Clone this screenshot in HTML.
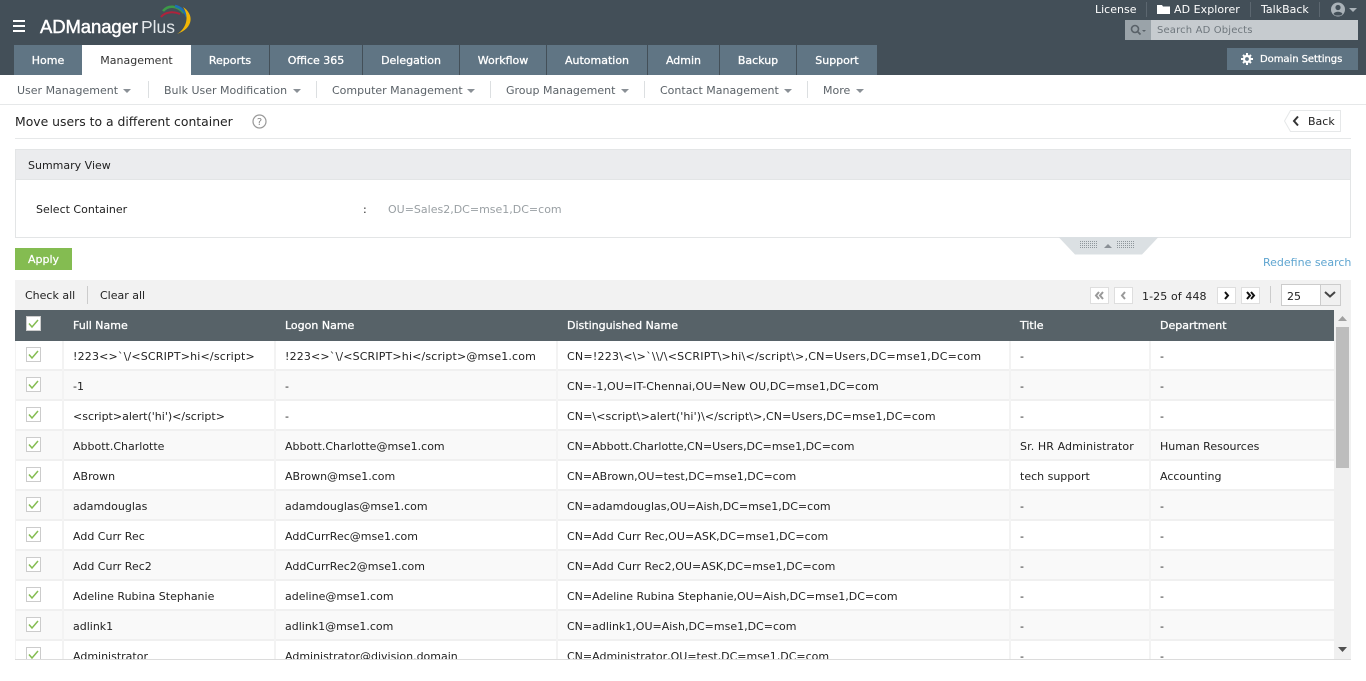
<!DOCTYPE html>
<html><head><meta charset="utf-8"><title>ADManager Plus</title>
<style>
html,body{margin:0;padding:0;background:#fff}
body{width:1366px;height:681px;position:relative;overflow:hidden;font:11px "DejaVu Sans",Verdana,sans-serif;color:#222}
.a,.a *{box-sizing:border-box}
.a{position:absolute;white-space:pre}
.t{position:absolute;white-space:pre;line-height:14px}
.s{-webkit-text-stroke:.3px}
.tab{position:absolute;top:45px;height:30px;background:#607584;color:#fff;font-size:11px;line-height:32px;text-align:center;-webkit-text-stroke:.3px #fff}
.sub{position:absolute;top:84px;color:#5b6268;font-size:11px;line-height:14px;white-space:pre}
.car{position:absolute;top:89px;width:0;height:0;border:4px solid transparent;border-top:4px solid #8a9096;border-bottom:0}
.sep{position:absolute;top:81px;width:1px;height:17px;background:#dcdfe1}
.r{position:absolute;left:15px;width:1319px;height:30px;border-bottom:2px solid #f0f0f0;box-sizing:border-box;overflow:visible}
.e{background:#f9f9f9}
.r span{position:absolute;top:9px;white-space:pre;line-height:14px;color:#222}
.r span:nth-of-type(1){left:58px}.r span:nth-of-type(2){left:270px}.r span:nth-of-type(3){left:552px}.r span:nth-of-type(4){left:1005px}.r span:nth-of-type(5){left:1145px}
.r svg{position:absolute;left:11px;top:6px}
.v{position:absolute;top:341px;width:2px;height:318px;background:#f3f3f3}
.pg{position:absolute;top:287px;width:19px;height:17px;background:#fff;border:1px solid #dedede;box-sizing:border-box}
.h{position:absolute;top:319px;color:#fff;font-size:11px;line-height:14px;white-space:pre;-webkit-text-stroke:.3px #fff}
</style></head><body>
<div class="a" style="left:0;top:0;width:1366px;height:75px;background:#434f58"></div>
<svg class="a" style="left:13px;top:20px" width="13" height="13"><rect width="12" height="2" y="0" fill="#fff"/><rect width="12" height="2" y="5" fill="#fff"/><rect width="12" height="2" y="10" fill="#fff"/></svg>
<div class="t" style="left:40px;top:16px;font:18.500px/22px 'Liberation Sans',sans-serif;color:#fff;-webkit-text-stroke:.45px #fff;letter-spacing:-.1px">ADManager<span style="position:absolute;left:101px;font-size:17.500px;-webkit-text-stroke:0;color:#e4e8eb;letter-spacing:0">Plus</span></div>
<svg class="a" style="left:155px;top:2px" width="40" height="34" fill="none">
<path d="M6 15C10 10 18 9 25 12" stroke="#b0223b" stroke-width="2"/>
<path d="M8 9C13 3 22 3 29 11" stroke="#3d9a48" stroke-width="2.500"/>
<path d="M20 4C25 5 30 9 32 15" stroke="#1d6fb5" stroke-width="2.500"/>
<path d="M28 5C39 12 39 26 22 32C31 27 35 15 28 5Z" fill="#f2b705"/>
</svg>
<div class="t" style="left:1095px;top:3px;color:#fff;font-size:11px">License</div>
<div class="a" style="left:1146px;top:2px;width:1px;height:15px;background:#5c6770"></div>
<svg class="a" style="left:1157px;top:4px" width="13" height="10"><path d="M0 1h5l1 1.500h7V10H0Z" fill="#fff"/></svg>
<div class="t" style="left:1174px;top:3px;color:#fff;font-size:11px;letter-spacing:.05px">AD Explorer</div>
<div class="a" style="left:1250px;top:2px;width:1px;height:15px;background:#5c6770"></div>
<div class="t" style="left:1261px;top:3px;color:#fff;font-size:11px">TalkBack</div>
<div class="a" style="left:1319px;top:2px;width:1px;height:15px;background:#5c6770"></div>
<svg class="a" style="left:1331px;top:2px" width="28" height="15"><circle cx="7" cy="7.500" r="7" fill="#aab2b8"/><circle cx="7" cy="5.500" r="2.600" fill="#434f58"/><path d="M2.500 12c1-3 8-3 9 0l-2 1.500h-5Z" fill="#434f58"/><path d="M18 6h8l-4 4Z" fill="#aab2b8"/></svg>
<div class="a" style="left:1125px;top:20px;width:233px;height:20px;background:#c6cbcf"></div>
<div class="a" style="left:1125px;top:20px;width:26px;height:20px;background:#9aa3a9"></div>
<svg class="a" style="left:1130px;top:24px" width="18" height="12" fill="none"><circle cx="5" cy="5" r="3.500" stroke="#596168" stroke-width="1.600"/><path d="M7.500 7.500l3 3" stroke="#596168" stroke-width="1.800"/><path d="M12 6h4l-2 2Z" fill="#596168"/></svg>
<div class="t" style="left:1157px;top:24px;font-size:10px;color:#6f777d;letter-spacing:.15px">Search AD Objects</div>
<div class="a" style="left:1227px;top:48px;width:131px;height:22px;background:#5f7483"></div>
<svg class="a" style="left:1241px;top:53px" width="12" height="12" viewBox="0 0 14 14"><circle cx="7" cy="7" r="3.500" fill="none" stroke="#fff" stroke-width="2.600"/><path d="M5.800 0h2.400v3H5.800ZM5.800 11h2.400v3H5.800ZM0 5.800h3v2.400H0ZM11 5.800h3v2.400h-3ZM1.500 3.200L3.200 1.500 5 3.300 3.300 5ZM9 10.700l1.700-1.700 1.800 1.800-1.700 1.700ZM1.500 10.800L3.300 9 5 10.700l-1.800 1.800ZM9 3.300l1.800-1.800 1.700 1.700L10.700 5Z" fill="#fff"/></svg>
<div class="t" style="left:1260px;top:53px;color:#fff;font-size:10px;-webkit-text-stroke:.25px #fff;letter-spacing:-.05px">Domain Settings</div>

<div class="tab" style="left:14px;width:68px">Home</div>
<div class="tab" style="left:82px;width:109px;background:#fff;color:#333;-webkit-text-stroke:0">Management</div>
<div class="tab" style="left:191px;width:78px">Reports</div>
<div class="tab" style="left:270px;width:92px">Office 365</div>
<div class="tab" style="left:363px;width:96px">Delegation</div>
<div class="tab" style="left:460px;width:86px">Workflow</div>
<div class="tab" style="left:547px;width:100px">Automation</div>
<div class="tab" style="left:648px;width:71px">Admin</div>
<div class="tab" style="left:720px;width:76px">Backup</div>
<div class="tab" style="left:797px;width:80px">Support</div>

<div class="sub" style="left:17px">User Management</div><div class="car" style="left:123px"></div><div class="sep" style="left:148px"></div>
<div class="sub" style="left:164px">Bulk User Modification</div><div class="car" style="left:293px"></div><div class="sep" style="left:316px"></div>
<div class="sub" style="left:332px">Computer Management</div><div class="car" style="left:467px"></div><div class="sep" style="left:490px"></div>
<div class="sub" style="left:506px">Group Management</div><div class="car" style="left:621px"></div><div class="sep" style="left:644px"></div>
<div class="sub" style="left:660px">Contact Management</div><div class="car" style="left:784px"></div><div class="sep" style="left:807px"></div>
<div class="sub" style="left:823px">More</div><div class="car" style="left:856px"></div>
<div class="a" style="left:0;top:104px;width:1366px;height:1px;background:#e6e8e9"></div>

<div class="t" style="left:15px;top:115px;font-size:12.400px;color:#222">Move users to a different container</div>
<svg class="a" style="left:252px;top:114px" width="15" height="15"><circle cx="7.500" cy="7.500" r="6.500" fill="none" stroke="#999" stroke-width="1.200"/><text x="7.500" y="11" text-anchor="middle" font-size="10" fill="#888" font-family="DejaVu Sans">?</text></svg>
<svg class="a" style="left:1283px;top:110px" width="59" height="22"><path d="M7.500 .5H57.500V21.500H7.500L1.500 11Z" fill="#fff" stroke="#e6e8e9"/><path d="M15 6.500L11 11l4 4.500" fill="none" stroke="#333" stroke-width="2"/></svg>
<div class="t" style="left:1308px;top:115px;color:#222">Back</div>
<div class="a" style="left:15px;top:138px;width:1336px;height:1px;background:#e6e8e9"></div>

<div class="a" style="left:15px;top:149px;width:1336px;height:89px;border:1px solid #e3e5e6"></div>
<div class="a" style="left:15px;top:149px;width:1336px;height:31px;background:#ebecee;border:1px solid #e3e5e6"></div>
<div class="t" style="left:28px;top:159px;color:#222">Summary View</div>
<div class="t" style="left:36px;top:203px;color:#222">Select Container</div>
<div class="t" style="left:363px;top:203px;color:#222">:</div>
<div class="t" style="left:388px;top:203px;color:#999fa3">OU=Sales2,DC=mse1,DC=com</div>
<svg class="a" style="left:1058px;top:237px" width="102" height="18"><path d="M.5 0H100.500L84 17.500H17Z" fill="#dbe0e3"/><path d="M46 11h8l-4-4Z" fill="#8a9096"/><path d="M22 4.500h17M22 6.500h17M22 8.500h17M22 10.500h17M59 4.500h17M59 6.500h17M59 8.500h17M59 10.500h17" stroke="#8f979c" stroke-dasharray="1 1" fill="none"/></svg>
<div class="a" style="left:15px;top:248px;width:57px;height:22px;background:#84bc51"></div>
<div class="t" style="left:28px;top:253px;color:#fff;font-size:11px;-webkit-text-stroke:.25px #fff">Apply</div>
<div class="t" style="left:1263px;top:256px;color:#5fa5d0">Redefine search</div>

<div class="a" style="left:15px;top:280px;width:1336px;height:30px;background:#f2f2f2"></div>
<div class="t" style="left:25px;top:289px;color:#222">Check all</div>
<div class="a" style="left:87px;top:286px;width:1px;height:18px;background:#ccc"></div>
<div class="t" style="left:100px;top:289px;color:#222">Clear all</div>
<div class="pg" style="left:1090px"></div>
<svg class="a" style="left:1090px;top:287px" width="19" height="17" fill="none" stroke="#999" stroke-width="2"><path d="M9 5L6 8.500 9 12M13 5L10 8.500l3 3.500"/></svg>
<div class="pg" style="left:1114px"></div>
<svg class="a" style="left:1114px;top:287px" width="19" height="17" fill="none" stroke="#999" stroke-width="2"><path d="M11 5L8 8.500l3 3.500"/></svg>
<div class="t" style="left:1142px;top:290px;color:#222;letter-spacing:.1px">1-25 of 448</div>
<div class="pg" style="left:1217px"></div>
<svg class="a" style="left:1217px;top:287px" width="19" height="17" fill="none" stroke="#111" stroke-width="2"><path d="M8 5l3 3.500L8 12"/></svg>
<div class="pg" style="left:1241px"></div>
<svg class="a" style="left:1241px;top:287px" width="19" height="17" fill="none" stroke="#111" stroke-width="2"><path d="M6 5l3 3.500L6 12M10 5l3 3.500-3 3.500"/></svg>
<div class="a" style="left:1270px;top:286px;width:1px;height:17px;background:#ccc"></div>
<div class="a" style="left:1281px;top:284px;width:60px;height:22px;background:#fff;border:1px solid #ccc"></div>
<div class="a" style="left:1320px;top:285px;width:20px;height:20px;background:#f0f0f0;border-left:1px solid #ccc"></div>
<svg class="a" style="left:1324px;top:291px" width="12" height="8"><path d="M1 1l5 4.500L11 1" fill="none" stroke="#444" stroke-width="2"/></svg>
<div class="t" style="left:1287px;top:290px;color:#222">25</div>

<div class="a" style="left:15px;top:310px;width:1319px;height:31px;background:#576268"></div>
<svg class="a" style="left:26px;top:316px" width="15" height="15"><rect x=".5" y=".5" width="14" height="14" fill="#fff" stroke="#ccc"/><path d="M3 7.500l3 3.500 6-7" fill="none" stroke="#84bc51" stroke-width="1.500"/></svg>
<div class="h" style="left:73px">Full Name</div>
<div class="h" style="left:285px">Logon Name</div>
<div class="h" style="left:567px">Distinguished Name</div>
<div class="h" style="left:1020px">Title</div>
<div class="h" style="left:1160px">Department</div>

<div class="a" style="left:15px;top:341px;width:1336px;height:318px;overflow:hidden">
<div class="r" style="left:0;top:0"><svg width="15" height="15"><rect x=".5" y=".5" width="14" height="14" fill="#fff" stroke="#ccc"/><path d="M3 7.500l3 3.500 6-7" fill="none" stroke="#84bc51" stroke-width="1.500"/></svg><span style="letter-spacing:.18px">!223&lt;&gt;`\/&lt;SCRIPT&gt;hi&lt;/script&gt;</span><span style="letter-spacing:.16px">!223&lt;&gt;`\/&lt;SCRIPT&gt;hi&lt;/script&gt;@mse1.com</span><span style="letter-spacing:.25px">CN=!223\&lt;\&gt;`\\/\&lt;SCRIPT\&gt;hi\&lt;/script\&gt;,CN=Users,DC=mse1,DC=com</span><span>-</span><span>-</span></div>
<div class="r e" style="left:0;top:30px"><svg width="15" height="15"><rect x=".5" y=".5" width="14" height="14" fill="#fff" stroke="#ccc"/><path d="M3 7.500l3 3.500 6-7" fill="none" stroke="#84bc51" stroke-width="1.500"/></svg><span>-1</span><span>-</span><span style="letter-spacing:.07px">CN=-1,OU=IT-Chennai,OU=New OU,DC=mse1,DC=com</span><span>-</span><span>-</span></div>
<div class="r" style="left:0;top:60px"><svg width="15" height="15"><rect x=".5" y=".5" width="14" height="14" fill="#fff" stroke="#ccc"/><path d="M3 7.500l3 3.500 6-7" fill="none" stroke="#84bc51" stroke-width="1.500"/></svg><span>&lt;script&gt;alert('hi')&lt;/script&gt;</span><span>-</span><span style="letter-spacing:.1px">CN=\&lt;script\&gt;alert('hi')\&lt;/script\&gt;,CN=Users,DC=mse1,DC=com</span><span>-</span><span>-</span></div>
<div class="r e" style="left:0;top:90px"><svg width="15" height="15"><rect x=".5" y=".5" width="14" height="14" fill="#fff" stroke="#ccc"/><path d="M3 7.500l3 3.500 6-7" fill="none" stroke="#84bc51" stroke-width="1.500"/></svg><span>Abbott.Charlotte</span><span>Abbott.Charlotte@mse1.com</span><span>CN=Abbott.Charlotte,CN=Users,DC=mse1,DC=com</span><span style="letter-spacing:.1px">Sr. HR Administrator</span><span>Human Resources</span></div>
<div class="r" style="left:0;top:120px"><svg width="15" height="15"><rect x=".5" y=".5" width="14" height="14" fill="#fff" stroke="#ccc"/><path d="M3 7.500l3 3.500 6-7" fill="none" stroke="#84bc51" stroke-width="1.500"/></svg><span>ABrown</span><span>ABrown@mse1.com</span><span>CN=ABrown,OU=test,DC=mse1,DC=com</span><span>tech support</span><span>Accounting</span></div>
<div class="r e" style="left:0;top:150px"><svg width="15" height="15"><rect x=".5" y=".5" width="14" height="14" fill="#fff" stroke="#ccc"/><path d="M3 7.500l3 3.500 6-7" fill="none" stroke="#84bc51" stroke-width="1.500"/></svg><span>adamdouglas</span><span>adamdouglas@mse1.com</span><span>CN=adamdouglas,OU=Aish,DC=mse1,DC=com</span><span>-</span><span>-</span></div>
<div class="r" style="left:0;top:180px"><svg width="15" height="15"><rect x=".5" y=".5" width="14" height="14" fill="#fff" stroke="#ccc"/><path d="M3 7.500l3 3.500 6-7" fill="none" stroke="#84bc51" stroke-width="1.500"/></svg><span>Add Curr Rec</span><span>AddCurrRec@mse1.com</span><span style="letter-spacing:.05px">CN=Add Curr Rec,OU=ASK,DC=mse1,DC=com</span><span>-</span><span>-</span></div>
<div class="r e" style="left:0;top:210px"><svg width="15" height="15"><rect x=".5" y=".5" width="14" height="14" fill="#fff" stroke="#ccc"/><path d="M3 7.500l3 3.500 6-7" fill="none" stroke="#84bc51" stroke-width="1.500"/></svg><span>Add Curr Rec2</span><span>AddCurrRec2@mse1.com</span><span style="letter-spacing:.05px">CN=Add Curr Rec2,OU=ASK,DC=mse1,DC=com</span><span>-</span><span>-</span></div>
<div class="r" style="left:0;top:240px"><svg width="15" height="15"><rect x=".5" y=".5" width="14" height="14" fill="#fff" stroke="#ccc"/><path d="M3 7.500l3 3.500 6-7" fill="none" stroke="#84bc51" stroke-width="1.500"/></svg><span>Adeline Rubina Stephanie</span><span>adeline@mse1.com</span><span>CN=Adeline Rubina Stephanie,OU=Aish,DC=mse1,DC=com</span><span>-</span><span>-</span></div>
<div class="r e" style="left:0;top:270px"><svg width="15" height="15"><rect x=".5" y=".5" width="14" height="14" fill="#fff" stroke="#ccc"/><path d="M3 7.500l3 3.500 6-7" fill="none" stroke="#84bc51" stroke-width="1.500"/></svg><span>adlink1</span><span>adlink1@mse1.com</span><span>CN=adlink1,OU=Aish,DC=mse1,DC=com</span><span>-</span><span>-</span></div>
<div class="r" style="left:0;top:300px"><svg width="15" height="15"><rect x=".5" y=".5" width="14" height="14" fill="#fff" stroke="#ccc"/><path d="M3 7.500l3 3.500 6-7" fill="none" stroke="#84bc51" stroke-width="1.500"/></svg><span>Administrator</span><span>Administrator@division.domain</span><span>CN=Administrator,OU=test,DC=mse1,DC=com</span><span>-</span><span>-</span></div>
</div>
<div class="v" style="left:15px;width:1px"></div>
<div class="v" style="left:62px"></div><div class="v" style="left:274px"></div><div class="v" style="left:556px"></div><div class="v" style="left:1009px"></div><div class="v" style="left:1149px"></div>
<div class="a" style="left:1334px;top:310px;width:17px;height:349px;background:#f0f0f0"></div>
<div class="a" style="left:1336px;top:327px;width:13px;height:141px;background:#bdbdbd"></div>
<svg class="a" style="left:1338px;top:316px" width="9" height="6"><path d="M0 5h9L4.500 0Z" fill="#a0a0a0"/></svg>
<svg class="a" style="left:1338px;top:647px" width="9" height="6"><path d="M0 0h9L4.500 5Z" fill="#505050"/></svg>
<div class="a" style="left:15px;top:659px;width:1336px;height:1px;background:#dcdcdc"></div>
</body></html>
